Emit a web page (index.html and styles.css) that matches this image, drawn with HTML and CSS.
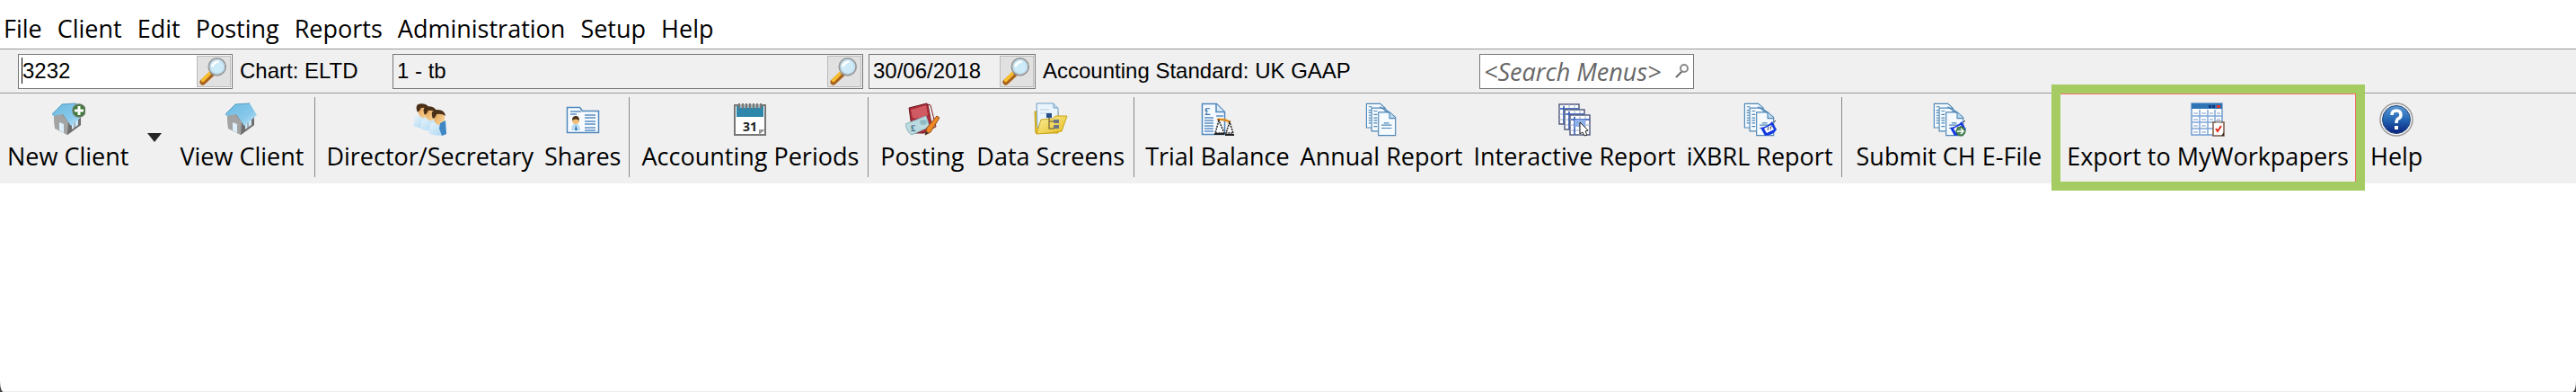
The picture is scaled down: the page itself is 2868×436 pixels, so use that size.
FILE: index.html
```html
<!DOCTYPE html>
<html lang="en">
<head>
<meta charset="utf-8">
<title>Accounts Production</title>
<link rel="stylesheet" href="styles.css">
</head>
<body>
<svg class="defs" aria-hidden="true">
  <defs>
    <linearGradient id="roof" x1="0" y1="0" x2="1" y2="1"><stop offset="0" stop-color="#6bb9e0"/><stop offset=".6" stop-color="#86c8ea"/><stop offset="1" stop-color="#c4e6f6"/></linearGradient>
    <linearGradient id="helpfill" x1="0" y1="0" x2="0" y2="1"><stop offset="0" stop-color="#5c9bd6"/><stop offset=".5" stop-color="#2467b4"/><stop offset="1" stop-color="#0a1f7c"/></linearGradient>
    <linearGradient id="folder" x1="0" y1="0" x2="1" y2="1"><stop offset="0" stop-color="#fbf0a0"/><stop offset="1" stop-color="#e6bd1e"/></linearGradient>
    <linearGradient id="shirt" x1="0" y1="0" x2="1" y2="1"><stop offset="0" stop-color="#e6f4fd"/><stop offset="1" stop-color="#a9d4f0"/></linearGradient>
    <linearGradient id="face" x1="0" y1="0" x2="1" y2="1"><stop offset="0" stop-color="#e09c4c"/><stop offset="1" stop-color="#fbdca4"/></linearGradient>
    <symbol id="house" viewBox="0 0 38 38">
      <path d="M3 15l1 13 14 8 15-11V12L20 4z" fill="#8b8b8b"/>
      <path d="M18 36V22l9-10 6 2v11z" fill="#6f6f6f"/>
      <path d="M3 15l8-3 8 10-1 14L4 29z" fill="#a3a3a3"/>
      <path d="M9 22l5 2v10l-5-3z" fill="#dceefa"/>
      <path d="M23 23l7-5v7l-7 5z" fill="#cfe8f8"/><path d="M26 20v8" stroke="#777"/>
      <path d="M1 13L12 2l16-1 8 13-14 12-9-13-11 2z" fill="url(#roof)"/>
      <path d="M1 13L12 2l16-1" fill="none" stroke="#5a9fc4"/>
    </symbol>
    <symbol id="lens" viewBox="0 0 34 34">
      <path d="M4 30L16 19" stroke="#a8621c" stroke-width="7" stroke-linecap="round"/>
      <path d="M4 28L14 18" stroke="#f7bd2e" stroke-width="4" stroke-linecap="round"/>
      <path d="M14 21l4-4" stroke="#777" stroke-width="4"/>
      <circle cx="21" cy="12" r="10" fill="#cfe9f8" stroke="#9a9a9a" stroke-width="2"/>
      <circle cx="21" cy="12" r="8" fill="#cdeaf9" stroke="#b9d6e8"/>
      <path d="M15 12q2-6 8-6" stroke="#fff" stroke-width="3" fill="none"/>
    </symbol>
    <symbol id="person" viewBox="0 0 20 30">
      <path d="M1 28q-2-12 6-13h6q7 2 6 14-9 2-18-1z" fill="url(#shirt)"/>
      <ellipse cx="12" cy="10" rx="6" ry="8" fill="url(#face)"/>
      <path d="M5 11Q1 1 10 1q8 0 9 7-4-3-10-2-1 4-4 5z" fill="#4a3019"/>
    </symbol>
    <symbol id="docs" viewBox="0 0 38 40">
      <g fill="#f4fafe" stroke="#4f86b5" stroke-width="1.2">
        <path d="M1.500 1.500h16l6 5v23h-22z"/><path d="M7.500 6.500h14l8 6v21h-22z"/>
        <path d="M15.500 11.500h13l7 6v21h-20z"/><path d="M28.500 11.500v7h7" fill="#b9d9ef"/>
      </g>
      <path d="M4 5h4M4 9h3M4 12h3M4 15h3M4 18h3M4 21h3M4 24h3M10 10h4M10 14h4M10 18h4M10 21h4M10 24h4M10 28h4M17 5l5 3M22 9l6 3M22 24h6M19 26.500h12M19 30h12" stroke="#4f86b5" stroke-width="1.300"/>
    </symbol>
    <symbol id="tag" viewBox="0 0 20 18">
      <path d="M1 8Q9 7 14 1l5 9q-3 6-13 7z" fill="#1438e0"/>
      <path d="M5 9l8-4 3 5-8 4z" fill="#fff"/><path d="M9 11l1-4M12 10l1-4" stroke="#445"/>
      <path d="M16 2l2-2" stroke="#333"/>
    </symbol>
    <symbol id="grid" viewBox="0 0 24 24">
      <path d="M1 1h22v22H1z" fill="#fff" stroke="#555d80" stroke-width="1.500"/>
      <path d="M1 6h22M1 12h22M1 18h22M6 1v22M12 1v22M18 1v22" stroke="#a3aecb"/>
      <path d="M2 6h21M6 3v20" stroke="#2e5cb8" stroke-width="1.500"/>
    </symbol>
  </defs>
</svg>

<div class="window">
  <nav class="menubar" aria-label="Main menu">
    <button class="menu" type="button">File</button>
    <button class="menu" type="button">Client</button>
    <button class="menu" type="button">Edit</button>
    <button class="menu" type="button">Posting</button>
    <button class="menu" type="button">Reports</button>
    <button class="menu" type="button">Administration</button>
    <button class="menu" type="button">Setup</button>
    <button class="menu" type="button">Help</button>
  </nav>

  <form class="context">
    <div class="field field-client">
      <span class="caret"></span>
      <input class="entry" type="text" value="3232" aria-label="Client code">
      <button class="lookup" type="button" aria-label="Find client"><svg><use href="#lens"/></svg></button>
    </div>
    <label class="caption caption-chart" for="chart">Chart: ELTD</label>
    <div class="field field-chart muted">
      <input class="entry" id="chart" type="text" value="1 - tb">
      <button class="lookup" type="button" aria-label="Find chart"><svg><use href="#lens"/></svg></button>
    </div>
    <div class="field field-date muted">
      <input class="entry" type="text" value="30/06/2018" aria-label="Period end">
      <button class="lookup" type="button" aria-label="Find period"><svg><use href="#lens"/></svg></button>
    </div>
    <span class="caption caption-standard">Accounting Standard: UK GAAP</span>
    <div class="field field-search">
      <input class="entry search" type="text" placeholder="&lt;Search Menus&gt;" aria-label="Search menus">
      <svg class="search-icon" viewBox="0 0 16 16"><path d="M1 15l7-7" stroke="#666" stroke-width="2"/><circle cx="10" cy="5" r="4" fill="#fff" stroke="#888" stroke-width="2"/></svg>
    </div>
  </form>

  <div class="toolbar" role="toolbar" aria-label="Tasks">
    <div class="group roomy">
      <button class="tool" type="button">
        <svg class="icon" viewBox="0 0 38 38"><use href="#house"/><circle cx="31" cy="9" r="7" fill="#3c7a35" stroke="#6b7a66" stroke-width="1.500"/><path d="M31 4v10M26 9h10" stroke="#fff" stroke-width="3"/></svg>
        New Client</button>
      <button class="drop" type="button" aria-label="More new client options"><svg viewBox="0 0 16 10"><path d="M0 0h16L8 10z" fill="#262626"/></svg></button>
      <button class="tool" type="button"><svg class="icon"><use href="#house"/></svg>View Client</button>
    </div>
    <div class="group snug">
      <button class="tool" type="button">
        <svg class="icon" viewBox="0 0 38 38"><use href="#person" x="0" y="0" width="19" height="29"/><use href="#person" x="8" y="3" width="19" height="29"/><use href="#person" x="17" y="7" width="20" height="30"/><path d="M30 23l6-3 1 15-5 2-3-8z" fill="#3f87c4"/></svg>
        Director/Secretary</button>
      <button class="tool" type="button">
        <svg class="icon" viewBox="0 0 38 38"><path d="M1.500 5.500h14l3 4h18v24h-35z" fill="#f7fbff" stroke="#4f86bd" stroke-width="1.500"/><path d="M5 10h12M5 13h7M21 14h12M21 17h12M21 21h12M21 24h12M21 28h12M21 31h12" stroke="#5b8fc4" stroke-width="1.500"/><path d="M6 31q0-7 5-8 5 1 5 8z" fill="#bcdcf2"/><path d="M11 25l2 6h-3z" fill="#2a72b8"/><circle cx="11" cy="20" r="4" fill="#f0be78"/><path d="M7 20q0-5 4-5t4 5q-4-3-8 0z" fill="#4a3019"/></svg>
        Shares</button>
    </div>
    <div class="group">
      <button class="tool" type="button">
        <svg class="icon" viewBox="0 0 38 38"><path d="M2 3h34v33H2z" fill="#fff" stroke="#777" stroke-width="2"/><path d="M4 4h30v12H4z" fill="#2f86ab"/><path d="M7 1v6M11 1v6M15 1v6M19 1v6M23 1v6M27 1v6M31 1v6" stroke="#777" stroke-width="2"/><path d="M9 1v5M13 1v5M17 1v5M21 1v5M25 1v5M29 1v5" stroke="#eee"/><path d="M29 36v-6h7z" fill="#999"/><text x="19" y="32" text-anchor="middle" class="day">31</text></svg>
        Accounting Periods</button>
    </div>
    <div class="group">
      <button class="tool" type="button">
        <svg class="icon" viewBox="0 0 38 38"><path d="M4 6L24 1l9 24-12 9H8z" fill="#a82a38" stroke="#6e1a22"/><path d="M6 8l17-5 2 11q-9 5-17 3z" fill="#cf5a62"/><path d="M25 2l3 1 6 24-4 2z" fill="#eee" stroke="#7e2229"/><path d="M0 24l23-9 4 12-20 9q-5-3-7-12z" fill="#bcdbe0" stroke="#8ab0b8"/><ellipse cx="20" cy="22" rx="4" ry="3" fill="#8fbcc4"/><text x="6" y="32" class="pound small" fill="#426b78">£</text><path d="M22 36l2-8 11-13 3 2-10 16z" fill="#ed8a24" stroke="#8f4716"/><path d="M22 36l1-4 3 2z" fill="#333"/></svg>
        Posting</button>
      <button class="tool" type="button">
        <svg class="icon" viewBox="0 0 38 38"><path d="M1 10h26v24H2z" fill="#e9c526" stroke="#c29b12"/><path d="M3 1h19l5 5v22H4z" fill="#eaf4fc" stroke="#6f9fc6"/><path d="M22 1v5h5" fill="#c3dcf0" stroke="#6f9fc6"/><path d="M7 8h10M7 12h12" stroke="#b9d2e6"/><path d="M3 35l5-16 13-1 3-3h13l-6 17-14 2z" fill="url(#folder)" stroke="#cba41a"/><path d="M17 15v14h6M17 21h6" fill="none" stroke="#8a793a" stroke-width="1.500"/><path d="M14 12h6v5h-6z" fill="#274f8c"/><path d="M22 19h6v4h-6zM22 25h6v4h-6z" fill="#6d7484"/></svg>
        Data Screens</button>
    </div>
    <div class="group snug">
      <button class="tool" type="button">
        <svg class="icon" viewBox="0 0 38 38"><path d="M2.500 1.500h16l9 9v25h-25z" fill="#f4faff" stroke="#4f86bd" stroke-width="1.500"/><path d="M18 1.500v9h9" fill="#dcebf8" stroke="#4f86bd" stroke-width="1.500"/><path d="M5 17h10M5 20h10M5 23h10M5 26h10M5 29h10M5 32h10M18 15h8" stroke="#5b8fc4" stroke-width="1.500"/><text x="5" y="14" class="pound" fill="#3c72a8">£</text><path d="M19 19q8-1 15 3" stroke="#e48a1c" stroke-width="2.500" fill="none"/><path d="M21 20l-4 14h10zM33 22l-4 12h8z" fill="#fff" fill-opacity=".5" stroke="#222" stroke-width="1.500" stroke-dasharray="2 1"/><path d="M16 35h11M28 36h10" stroke="#222" stroke-width="2"/></svg>
        Trial Balance</button>
      <button class="tool" type="button"><svg class="icon"><use href="#docs"/></svg>Annual Report</button>
      <button class="tool" type="button">
        <svg class="icon" viewBox="0 0 38 38"><use href="#grid" x="1" y="1" width="24" height="24"/><use href="#grid" x="7" y="7" width="24" height="24"/><use href="#grid" x="13" y="13" width="24" height="24"/><path d="M19 19h12v8H19z" fill="#8fb0e8"/><path d="M25 22l9 9-3 1 2 4-3 1-2-4-3 2z" fill="#fff" stroke="#222"/></svg>
        Interactive Report</button>
      <button class="tool" type="button">
        <svg class="icon" viewBox="0 0 38 38"><use href="#docs"/><use href="#tag" x="19" y="20" width="20" height="18"/></svg>
        iXBRL Report</button>
    </div>
    <div class="group">
      <button class="tool submit" type="button">
        <svg class="icon" viewBox="0 0 38 38"><use href="#docs"/><use href="#tag" x="19" y="20" width="20" height="18"/><circle cx="32" cy="32" r="5" fill="#4f8a55" stroke="#356b3b"/><path d="M28 32h7M32 29l3 3-3 3" fill="none" stroke="#fff" stroke-width="1.500"/></svg>
        Submit CH E-File</button>
      <button class="tool highlighted" type="button">
        <svg class="icon" viewBox="0 0 38 38"><path d="M1 1h34v35H1z" fill="#fff" stroke="#6f9bd0" stroke-width="1.500"/><path d="M1 1h34v6H1z" fill="#2f74b4"/><path d="M20 3h3v3h-3zM24 3h3v3h-3z" fill="#14387c"/><path d="M29 3h4v3h-4z" fill="#e0352a"/><path d="M1 15h34M1 22h34M1 29h34M10 8v28M19 8v28M27 8v28" stroke="#7fa6d8" stroke-width="1.500"/><path d="M3 12h5M12 12h5M21 12h4M29 12h4M3 19h5M12 19h5M21 19h4M29 19h4M3 26h5M12 26h5M3 33h5M12 33h5" stroke="#a9bfdc" stroke-width="1.500"/><path d="M25 22h12v15H25z" fill="#fff" stroke="#7a5a48" stroke-width="1.500"/><path d="M28 20h6v3h-6z" fill="#aaa"/><path d="M28 29l2 3 4-6" fill="none" stroke="#e02818" stroke-width="2"/><path d="M34 37l3-4v4z" fill="#3b2a20"/></svg>
        Export to MyWorkpapers</button>
      <button class="tool" type="button">
        <svg class="icon" viewBox="0 0 38 38"><circle cx="19" cy="19" r="18" fill="#f5f5f5" stroke="#999" stroke-width="1.500"/><circle cx="19" cy="19" r="15.500" fill="url(#helpfill)" stroke="#23477c"/><path d="M14 14q0-5 5-5t5 5q0 3-3 4-2 1-2 5" fill="none" stroke="#fff" stroke-width="3.500"/><path d="M17 26h4v4h-4z" fill="#fff"/></svg>
        Help</button>
    </div>
  </div>
  <main class="workspace"></main>
</div>
</body>
</html>
```

FILE: styles.css
```css
* { box-sizing: border-box; }

body {
  margin: 0;
  background: #444;
  color: #000;
  font-family: "Open Sans", "Noto Sans", sans-serif;
  font-size: 27px;
}

button, input { font: inherit; color: inherit; }

button {
  margin: 0;
  padding: 0;
  border: 0;
  background: none;
  white-space: nowrap;
}

.defs { position: absolute; width: 0; height: 0; }

.window {
  display: flex;
  flex-direction: column;
  min-height: 100vh;
  background: #fff;
  border-bottom: 1px solid #eee;
  border-radius: 0 0 4px 4px / 0 0 12px 12px;
}

.menubar {
  display: flex;
  gap: 17px;
  height: 54px;
  padding: 9px 4px 0;
  line-height: 46px;
}

.context {
  display: flex;
  align-items: center;
  height: 50px;
  padding-left: 20px;
  border-top: 1px solid #999;
  border-bottom: 1px solid #999;
  background: #f0f0f0;
  font-family: "Liberation Sans", Arial, sans-serif;
  font-size: 24px;
}

.field {
  position: relative;
  display: flex;
  align-items: center;
  height: 39px;
  padding-right: 1px;
  border: 1px solid #777;
  background: #fff;
}

.muted { background: #f0f0f0; }
.field-client { width: 239px; }
.field-chart { width: 524px; }
.field-date { width: 186px; margin-left: 6px; }
.field-search { width: 239px; padding-right: 4px; }

.entry {
  flex: 1;
  min-width: 0;
  height: 100%;
  padding: 0 0 0 4px;
  border: 0;
  outline: 0;
  background: none;
}

.caret {
  position: absolute;
  left: 3px;
  top: 3px;
  width: 1px;
  height: 29px;
  background: #000;
}

.lookup {
  display: grid;
  place-items: center;
  width: 38px;
  height: 35px;
  border: 1px solid #bbb;
  background: #e1e1e1;
}

.lookup svg { width: 32px; height: 32px; }

.caption { padding-left: 8px; white-space: nowrap; }
.caption-chart { width: 178px; }
.caption-standard { width: 494px; }

.search {
  font-family: "Open Sans", "Noto Sans", sans-serif;
  font-size: 27px;
  font-style: italic;
}

.search::placeholder { color: #666; opacity: 1; }
.search-icon { flex: none; width: 16px; height: 16px; }

.toolbar {
  display: flex;
  height: 100px;
  background: #f0f0f0;
}

.group { display: flex; padding-right: 3px; }

.group + .group { padding-left: 6px; }

.group + .group::before {
  content: "";
  width: 1px;
  height: 89px;
  margin: 4px 6px 0 -6px;
  background: #888;
}

.tool {
  display: flex;
  flex-direction: column;
  align-items: center;
  height: 98px;
  padding: 10px 7px 0;
  line-height: 44px;
}

.roomy .tool { padding-left: 8px; padding-right: 9px; }
.snug .tool { padding-left: 6px; padding-right: 6px; }
.submit { padding-left: 10px; padding-right: 10px; }

.icon { width: 38px; height: 38px; }

.day { font: 700 14px "Noto Sans", sans-serif; fill: #222; }
.pound { font: 700 13px "Liberation Serif", serif; }
.small { font-size: 11px; }

.drop { display: flex; width: 40px; padding: 44px 12px 0; }
.drop svg { width: 16px; height: 10px; }

.highlighted {
  position: relative;
  z-index: 1;
  margin: 0 9px 0 11px;
  padding-top: 9px;
  border: 1px solid #f07068;
  border-left: 0;
  border-bottom: 0;
  outline: 10px solid #a5cc62;
}

.workspace { flex: 1; }
```
